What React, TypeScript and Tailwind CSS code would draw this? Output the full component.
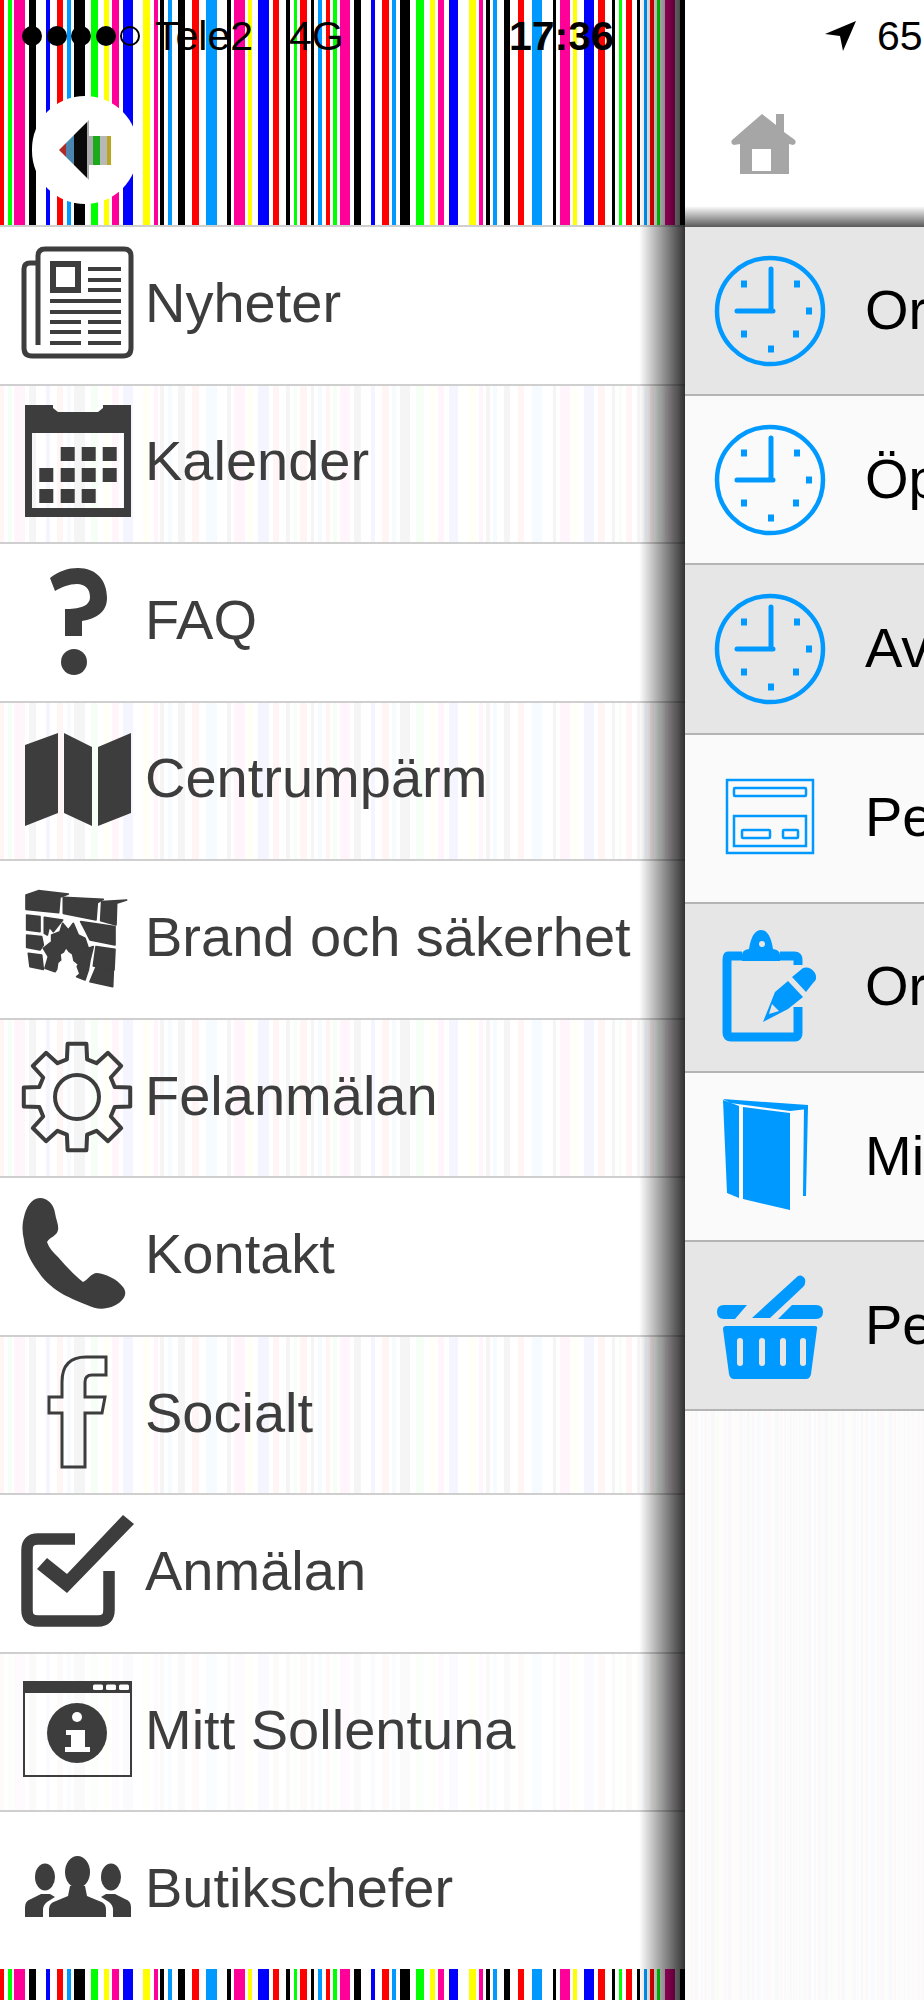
const K = '#000000';
const R = '#ff0000';
const G = '#00ff00';
const M = '#ff0099';
const B = '#0000ff';
const L = '#0099ff';
const Y = '#ffff00';

const stripes: [number, number, string][] = [
  [0, 4, R], [8, 4, G], [14, 11, M], [29, 7, K], [46, 4, B], [57, 6, R], [67, 4, L], [74, 11, K], [91, 7, G],
  [104, 5, Y], [112, 7, M], [123, 10, B], [143, 7, Y], [154, 4, M], [160, 4, K], [168, 4, L], [178, 7, K],
  [192, 7, R], [206, 11, L], [227, 4, K], [234, 11, M], [248, 4, Y], [258, 11, B], [273, 6, R], [286, 4, K],
  [294, 3, G], [300, 7, R], [311, 3, K], [318, 4, L], [326, 4, R], [333, 4, G], [340, 10, M], [354, 7, K],
  [371, 4, B], [382, 7, R], [392, 4, L], [400, 10, K], [416, 8, G], [430, 5, Y], [438, 6, M], [449, 9, B],
  [469, 7, Y], [479, 4, M], [486, 4, K], [493, 4, L], [504, 6, K], [518, 6, R], [532, 10, L], [553, 3, K],
  [560, 10, M], [573, 4, Y], [584, 10, B], [598, 7, R], [612, 3, K], [619, 3, G], [626, 6, R], [637, 3, K],
  [644, 3, L], [650, 4, R], [657, 3, G], [665, 10, M], [680, 5, K],
];

const Stripes = ({ className }: { className: string }) => (
  <svg className={className} viewBox="0 0 685 10" preserveAspectRatio="none">
    {stripes.map(([x, w, c]) => (
      <rect key={x} x={x} y={0} width={w} height={10} fill={c} />
    ))}
  </svg>
);

const gearPath = () => {
  const pt = (r: number, deg: number) => {
    const a = ((deg - 90) * Math.PI) / 180;
    return `${(61 + r * Math.cos(a)).toFixed(1)} ${(59 + r * Math.sin(a)).toFixed(1)}`;
  };
  let d = '';
  for (let i = 0; i < 8; i++) {
    const a = i * 45;
    d += `${i === 0 ? 'M' : 'L'}${pt(39, a - 15)} L${pt(54, a - 10)} L${pt(54, a + 10)} L${pt(39, a + 15)} `;
  }
  return d + 'Z';
};

const Dark = '#3d3d3d';
const Icon = ({ children }: { children: React.ReactNode }) => (
  <svg className="w-[120px] h-[120px] shrink-0 -mt-[1px]" viewBox="0 0 120 120">
    {children}
  </svg>
);

const leftIcons: React.ReactNode[] = [
  <g key="news">
    <path d="M22 18H14Q8 18 8 24V103Q8 111 16 111H107Q115 111 115 103V11Q115 4 108 4H29Q22 4 22 11V100" fill="none" stroke={Dark} strokeWidth="5" />
    <rect x="37" y="19" width="25" height="26" fill="none" stroke={Dark} strokeWidth="6" />
    <path d="M72 24H105M72 35H105M72 45H105M34 56H105M34 67H105M34 77H65M72 77H105M34 87H65M72 87H105M34 98H65M72 98H105" stroke={Dark} strokeWidth="4" />
  </g>,
  <g key="cal" fill={Dark}>
    <path fillRule="evenodd" d="M9 2H37V5L42 9H82L87 5V2H115V114H9ZM16 30V105H108V30Z" />
    {[[44.7, 44], [65.7, 44], [86.7, 44], [23.3, 65], [44.7, 65], [65.7, 65], [86.7, 65], [23.3, 86], [44.7, 86], [65.7, 86]].map(([x, y]) => (
      <rect key={`${x}-${y}`} x={x} y={y} width="14" height="14" />
    ))}
  </g>,
  <g key="faq" fill={Dark}>
    <path d="M34 16C43 9 52 6 62 6C80 6 91 18 91 36C91 50 80 57 66 59V74H49V47C62 47 74 45 74 35C74 27 69 22 61 22C53 22 46 25 39 29Z" />
    <circle cx="58" cy="100" r="13" />
  </g>,
  <g key="map" fill={Dark}>
    <path d="M9 25L42 13V93L9 106Z" />
    <path d="M48 13L76 27V106L48 93Z" />
    <path d="M82 27L115 13V93L82 106Z" />
  </g>,
  <g key="brand" fill={Dark} stroke={Dark} strokeWidth="5" strokeLinejoin="round" transform="translate(-6 -9) scale(.3333)">
    <path d="M48 75L85 62L175 72L150 82L146 128L48 118Z" />
    <path d="M160 82L280 88L262 98L258 150L160 130Z" />
    <path d="M275 95L350 90L320 100L318 165L272 152Z" />
    <path d="M50 135L90 140V185L50 180Z" />
    <path d="M103 142L158 150L130 185L118 170L112 195L103 190Z" />
    <path d="M212 155L315 170V225L240 210L225 180Z" />
    <path d="M50 195L95 200L100 225L90 240L50 232Z" />
    <path d="M258 230L315 238L312 300L250 288Z" />
    <path d="M55 250L95 255L100 298L60 290Z" />
    <path d="M258 292L310 300L308 350L240 335Z" />
    <path d="M105 295L115 260L100 235L125 215L125 195L150 185L158 160L175 180L190 160L205 195L225 205L235 235L250 230L240 270L235 300L225 330L200 320L210 312L202 290L205 282L192 272L188 252L178 245L168 232L160 246L150 252L152 270L143 278L140 298L135 305Z" />
  </g>,
  <g key="gear" fill="none" stroke={Dark} strokeWidth="4" strokeLinejoin="round">
    <path d={gearPath()} />
    <circle cx="61" cy="59" r="22" />
  </g>,
  <path key="phone" fill={Dark} d="M24 2C32 2 38 9 39 17C40 24 43 29 42 34C41 40 34 41 31 46C33 52 37 56 42 61C50 70 58 79 67 86C72 84 75 77 81 77C90 78 101 83 107 91C110 95 110 99 107 103C103 108 97 111 91 112C84 114 78 112 71 109C51 101 34 94 21 74C14 64 9 54 8 44C6 36 6 28 8 21C10 12 15 2 24 2Z" />,
  <path key="fb" fill="none" stroke={Dark} strokeWidth="3" d="M90 2V20H76Q69 20 69 27V42H89L86 58H69V112H46V58H33V42H46V27Q46 2 70 2Z" />,
  <g key="check" fill={Dark}>
    <path d="M59 26H22Q11 26 11 37V97Q11 108 22 108H82Q93 108 93 97V58" fill="none" stroke={Dark} strokeWidth="11.5" />
    <path d="M21 56L31 45L51 61L107 2L118 11L51 80Z" />
  </g>,
  <g key="info">
    <rect x="8" y="10" width="107" height="94" fill="none" stroke={Dark} strokeWidth="2" />
    <rect x="8" y="10" width="107" height="11" fill={Dark} />
    <rect x="77" y="12.5" width="10" height="5.5" rx="1.5" fill="#fff" />
    <rect x="90" y="12.5" width="10" height="5.5" rx="1.5" fill="#fff" />
    <rect x="103" y="12.5" width="10" height="5.5" rx="1.5" fill="#fff" />
    <circle cx="61" cy="61" r="30" fill={Dark} />
    <circle cx="61" cy="45" r="5" fill="#fff" />
    <path d="M50 58H69V75H74V80H49V75H55V63H50Z" fill="#fff" />
  </g>,
  <g key="people" fill={Dark}>
    <ellipse cx="61.5" cy="42" rx="12.5" ry="16" />
    <path d="M33 87V79Q33 73 40 71L52 66L54 56H69L71 66L83 71Q90 73 90 79V87Z" />
    <ellipse cx="29" cy="47" rx="10" ry="13.5" />
    <path d="M9 87V77Q9 71 15 69L25 64L34 64L39 67L31 72Q27 75 27 80V87Z" />
    <ellipse cx="95" cy="47" rx="10" ry="13.5" />
    <path d="M115 87V77Q115 71 109 69L99 64L90 64L85 67L93 72Q97 75 97 80V87Z" />
  </g>,
];

const leftRows = ['Nyheter', 'Kalender', 'FAQ', 'Centrumpärm', 'Brand och säkerhet', 'Felanmälan', 'Kontakt', 'Socialt', 'Anmälan', 'Mitt Sollentuna', 'Butikschefer'];

const Blue = '#0099ff';

const Clock = () => (
  <g>
    <circle cx="60" cy="60" r="53" fill="none" stroke={Blue} strokeWidth="4.5" />
    <path d="M61 18V60M27 60H63" fill="none" stroke={Blue} strokeWidth="5" strokeLinecap="round" />
    {[[87, 33], [99, 60], [86, 83], [61, 98], [34, 83], [34, 33]].map(([x, y]) => (
      <rect key={`${x}-${y}`} x={x - 3} y={y - 3.5} width="6" height="7" fill={Blue} />
    ))}
  </g>
);

const rightRows: { text: string; icon: React.ReactNode; grey: boolean }[] = [
  { text: 'Or', icon: <Clock />, grey: true },
  { text: 'Öp', icon: <Clock />, grey: false },
  { text: 'Av', icon: <Clock />, grey: true },
  {
    text: 'Pe',
    grey: false,
    icon: (
      <g fill="none" stroke={Blue} strokeWidth="2.5">
        <rect x="17" y="22" width="86" height="73" />
        <rect x="24" y="30" width="72" height="8" rx="1" />
        <rect x="24" y="58" width="72" height="30" />
        <rect x="32" y="72" width="28" height="8" rx="1" />
        <rect x="73" y="72" width="15" height="8" rx="1" />
      </g>
    ),
  },
  {
    text: 'Or',
    grey: true,
    icon: (
      <g fill={Blue}>
        <path d="M32 29H18Q17 29 17 33V106Q17 110 21 110H85Q88 110 88 106V80" fill="none" stroke={Blue} strokeWidth="9" />
        <path d="M70 29H85Q88 29 88 33V38" fill="none" stroke={Blue} strokeWidth="9" />
        <path d="M32 34V28Q32 23 39 22Q42 3 51 3Q60 3 63 22Q70 23 70 28V34Z" />
        <circle cx="52" cy="17" r="3" fill="#e6e6e6" />
        <path d="M82 50L93 41Q100 39 105 46Q108 52 103 56L96 65Z" />
        <path d="M65 65L78 54L93 70L78 82L53 95ZM62 77L59 87L69 84Z" fillRule="evenodd" />
      </g>
    ),
  },
  {
    text: 'Mi',
    grey: false,
    icon: (
      <g fill={Blue}>
        <path d="M13 3L29 9V101L17 96Z" />
        <path d="M33 10L80 16V113L33 102Z" />
        <path d="M13 2L98 8V12L80 14L20 6Z" />
        <path d="M94 9H98L96 99H93Z" />
      </g>
    ),
  },
  {
    text: 'Pe',
    grey: true,
    icon: (
      <g fill={Blue}>
        <path d="M14 39H37L25 53H14Q7 53 7 46Q7 39 14 39Z" />
        <path d="M82 39H106Q113 39 113 46Q113 53 106 53H68Z" />
        <path d="M42 52L88 10Q92 8 95 13Q96 18 93 21L60 52Z" />
        <path d="M16 60H105Q108 60 107 63L101 108Q100 113 96 113H24Q20 113 19 108L13 63Q13 60 16 60Z" />
        {[27, 49, 70, 90].map((x) => (
          <rect key={x} x={x} y="72" width="6" height="28" rx="3" fill="#e6e6e6" />
        ))}
      </g>
    ),
  },
];

const App = () => {
  return (
    <div className="flex w-[924px] h-[2000px] overflow-hidden bg-white text-[56px] leading-none font-['Liberation_Sans',Arial,sans-serif]">
      <div className="relative flex flex-col w-[685px] shrink-0 h-full">
        <div className="relative h-[227px] shrink-0 overflow-hidden border-b-2 border-[#cfcfcf]">
          <Stripes className="absolute inset-0 w-full h-full" />
          <div className="relative flex items-center h-[72px] text-black text-[41px]">
            <div className="flex items-center gap-[4.6px] ml-[22px] w-[133px]">
              <span className="w-5 h-5 rounded-full bg-black" />
              <span className="w-5 h-5 rounded-full bg-black" />
              <span className="w-5 h-5 rounded-full bg-black" />
              <span className="w-5 h-5 rounded-full bg-black" />
              <span className="w-5 h-5 rounded-full border-2 border-black" />
            </div>
            <span className="w-[134px]">Tele2</span>
            <span className="w-[220px]">4G</span>
            <span className="font-bold">17:36</span>
          </div>
          <div className="relative flex items-center justify-center w-[106px] h-[108px] ml-[32px] mt-[24px] rounded-full bg-white">
            <svg className="w-[52px] h-[60px]" viewBox="57 119 52 60">
              <clipPath id="back-arrow">
                <path d="M57 149L87 119V135H109V164H87V179Z" />
              </clipPath>
              <g clipPath="url(#back-arrow)">
                <rect x="57" y="119" width="7" height="60" fill="#b02a2a" />
                <rect x="64" y="119" width="8" height="60" fill="#4a86b0" />
                <rect x="72" y="119" width="13" height="60" fill="#0a0a0a" />
                <rect x="85" y="119" width="6" height="60" fill="#aaaaaa" />
                <rect x="91" y="119" width="7" height="60" fill="#1aaa1a" />
                <rect x="98" y="119" width="7" height="60" fill="#b8b8b8" />
                <rect x="105" y="119" width="4" height="60" fill="#b8a820" />
              </g>
            </svg>
          </div>
        </div>
        <div className="flex flex-col flex-1">
          {leftRows.map((text, i) => (
            <div key={text} className="relative flex flex-1 items-center gap-[9px] pl-4 border-b-2 border-[#cfcfcf] last:border-b-0 text-[#3d3d3d]">
              {i % 2 === 1 && <Stripes className={i === 9 ? 'absolute inset-0 w-full h-full opacity-[.015]' : 'absolute inset-0 w-full h-full opacity-[.035]'} />}
              <span className="relative flex">
                <Icon>{leftIcons[i]}</Icon>
              </span>
              <span className="relative whitespace-nowrap -mt-[5px]">{text}</span>
            </div>
          ))}
        </div>
        <Stripes className="w-full h-[31px] shrink-0" />
        <div className="absolute top-0 bottom-0 right-0 w-[46px] bg-gradient-to-r from-transparent to-black/80" />
      </div>

      <div className="flex flex-col flex-1 min-w-0 h-full bg-[#fdfdfd]">
        <div className="relative h-[227px] shrink-0 bg-white">
          <div className="flex items-center h-[72px] pl-[140px] text-black text-[41px]">
            <svg className="w-[32px] h-[31px]" viewBox="0 0 32 31">
              <path d="M31 0L0 13L15 15L18 30Z" fill="#000" />
            </svg>
            <span className="ml-[20px] whitespace-nowrap">65</span>
          </div>
          <svg className="w-[66px] h-[62px] ml-[45px] mt-[41px]" viewBox="731 112 66 62">
            <path fillRule="evenodd" d="M763 113L777 124V113H785V131L796 139Q798 143 794 144L790 143V173H741V143L735 144Q731 143 733 139ZM753 148V170H772V148Z" fill="#a6a6a6" />
          </svg>
          <div className="absolute bottom-0 left-0 right-0 h-[21px] bg-gradient-to-b from-transparent to-black/65" />
        </div>
        {rightRows.map((row, i) => (
          <div key={i} className={row.grey ? 'flex items-center h-[169.2px] shrink-0 gap-[35px] pl-[25px] overflow-hidden border-b-2 border-[#b4b4b4] last:border-b-0 bg-[#e6e6e6] text-black' : 'flex items-center h-[169.2px] shrink-0 gap-[35px] pl-[25px] overflow-hidden border-b-2 border-[#b4b4b4] bg-[#fafafa] text-black'}>
            <svg className="w-[120px] h-[120px] shrink-0" viewBox="0 0 120 120">
              {row.icon}
            </svg>
            <span className="whitespace-nowrap -mt-[2px]">{row.text}</span>
          </div>
        ))}
        <div className="relative flex-1 overflow-hidden">
          <Stripes className="absolute inset-0 w-full h-full opacity-[.015]" />
        </div>
      </div>
    </div>
  );
};

export default App;
